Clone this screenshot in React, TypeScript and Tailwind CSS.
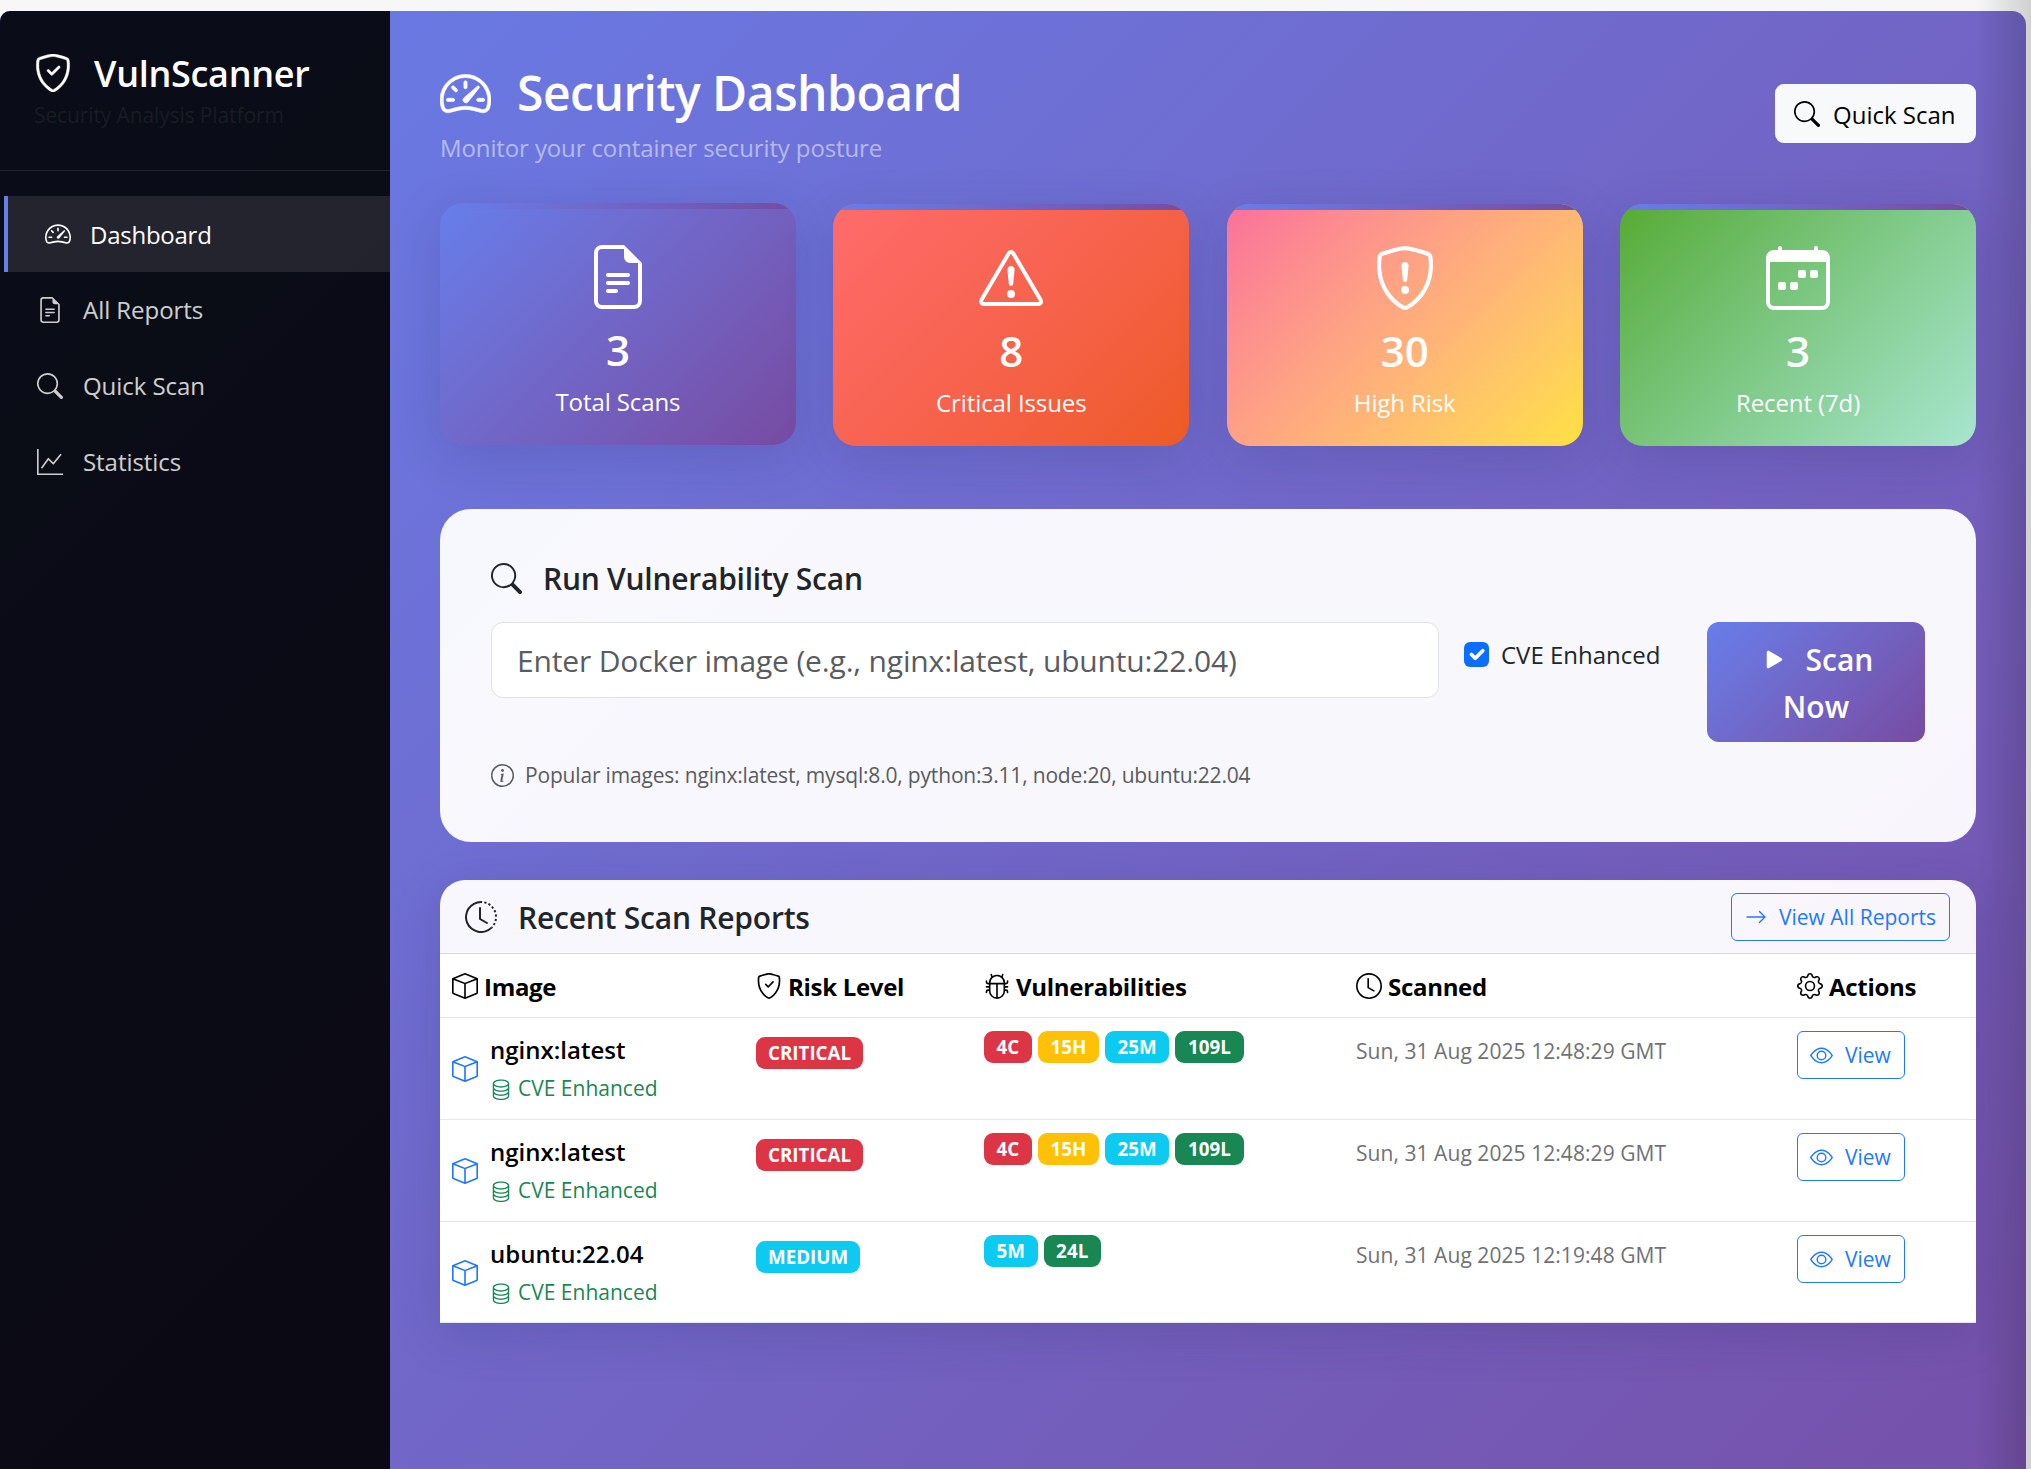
import React from "react";
import {
  BsArrowRight, BsBox, BsBug, BsCalendarWeek, BsClock, BsClockHistory, BsDatabase,
  BsExclamationTriangle, BsEye, BsFileEarmarkText, BsGear, BsGraphUp, BsInfoCircle,
  BsPlayFill, BsSearch, BsShieldCheck, BsShieldExclamation, BsSpeedometer2,
} from "react-icons/bs";

const navItems = [
  { label: "All Reports", icon: BsFileEarmarkText },
  { label: "Quick Scan", icon: BsSearch },
  { label: "Statistics", icon: BsGraphUp },
];

const stats = [
  { value: "3", label: "Total Scans", icon: BsFileEarmarkText, card: "-mt-px mb-px from-[#667eea] to-[#764ba2]" },
  { value: "8", label: "Critical Issues", icon: BsExclamationTriangle, card: "from-[#ff6b6b] to-[#ee5a24]" },
  { value: "30", label: "High Risk", icon: BsShieldExclamation, card: "from-[#fa709a] to-[#fee140]" },
  { value: "3", label: "Recent (7d)", icon: BsCalendarWeek, card: "from-[#56ab2f] to-[#a8e6cf]" },
];

const RED = "bg-[#dc3545]";
const YELLOW = "bg-[#ffc107]";
const CYAN = "bg-[#0dcaf0]";
const GREEN = "bg-[#198754]";

const rows = [
  { image: "nginx:latest", risk: "CRITICAL", riskColor: RED, height: "h-[102px]", time: "Sun, 31 Aug 2025 12:48:29 GMT", vulns: [["4C", RED], ["15H", YELLOW], ["25M", CYAN], ["109L", GREEN]] },
  { image: "nginx:latest", risk: "CRITICAL", riskColor: RED, height: "h-[102px]", time: "Sun, 31 Aug 2025 12:48:29 GMT", vulns: [["4C", RED], ["15H", YELLOW], ["25M", CYAN], ["109L", GREEN]] },
  { image: "ubuntu:22.04", risk: "MEDIUM", riskColor: CYAN, height: "h-[101px]", time: "Sun, 31 Aug 2025 12:19:48 GMT", vulns: [["5M", CYAN], ["24L", GREEN]] },
];

const columns = [
  { label: "Image", icon: BsBox },
  { label: "Risk Level", icon: BsShieldCheck },
  { label: "Vulnerabilities", icon: BsBug },
  { label: "Scanned", icon: BsClock },
  { label: "Actions", icon: BsGear },
];

const GRID = "grid grid-cols-[304px_228px_372px_441px_191px]";

function Sidebar() {
  return (
    <aside className="w-[390px] shrink-0 bg-black/90 text-white">
      <div className="h-[160px] border-b border-white/10 pt-[37px] pl-[34px]">
        <div className="flex h-[50px] items-center">
          <BsShieldCheck className="size-[38px]" strokeWidth={0.2} />
          <span className="ml-[22px] pt-[2px] text-[36px] font-semibold leading-[50px] tracking-[-0.3px]">VulnScanner</span>
        </div>
        <div className="text-[21px] leading-[34px] tracking-[-0.12px] text-[#191c23]">Security Analysis Platform</div>
      </div>
      <nav className="pt-[25px]">
        <div className="ml-1 flex h-[76px] items-center border-l-4 border-[#667eea] bg-white/10 pl-[37px]">
          <BsSpeedometer2 className="size-[26px]" />
          <span className="ml-[19px] pt-px text-[24px] tracking-[-0.25px]">Dashboard</span>
        </div>
        {navItems.map(({ label, icon: Icon }) => (
          <div key={label} className="flex h-[76px] items-center pl-[37px] text-white/80">
            <Icon className="size-[26px]" />
            <span className="ml-[20px] text-[24px] tracking-[-0.05px]">{label}</span>
          </div>
        ))}
      </nav>
    </aside>
  );
}

function Header() {
  return (
    <header className="flex h-[193px] justify-between pt-[47px]">
      <div>
        <h1 className="flex h-[70px] items-center text-[48px] font-semibold tracking-[-0.5px] text-white">
          <BsSpeedometer2 className="size-[51px]" strokeWidth={0.2} />
          <span className="ml-[26px]">Security Dashboard</span>
        </h1>
        <p className="pt-px text-[24px] leading-[38px] tracking-[-0.12px] text-white/50">Monitor your container security posture</p>
      </div>
      <button className="mt-[26px] flex h-[59px] w-[201px] items-center rounded-[9px] bg-[#f8f9fa] pl-[19px] text-[24px] text-black">
        <BsSearch className="size-[26px]" />
        <span className="ml-[13px] pt-[2px]">Quick Scan</span>
      </button>
    </header>
  );
}

function StatCards() {
  return (
    <section className="grid h-[242px] grid-cols-4 gap-[37.5px]">
      {stats.map(({ value, label, icon: Icon, card }, i) => (
        <div key={i} className={`flex flex-col items-center overflow-hidden rounded-[23px] bg-linear-135 text-white shadow-[0_12px_50px_rgba(31,38,90,0.16)] ${card}`}>
          <div className="h-[6px] w-full shrink-0 bg-linear-to-r from-[#667eea] to-[#764ba2]" />
          <Icon className="mt-[36px] size-[64px] shrink-0" />
          <div className="mt-[15px] text-[42px] font-semibold leading-[52px]">{value}</div>
          <div className="mt-[7px] text-[24px] leading-[38px] tracking-[-0.1px]">{label}</div>
        </div>
      ))}
    </section>
  );
}

function ScanPanel() {
  return (
    <section className="mt-[63px] h-[333px] rounded-[31px] bg-white/95 px-[51px] pt-[49px] text-[#212529]">
      <h2 className="flex h-[40px] items-center text-[30px] font-semibold tracking-[-0.25px]">
        <BsSearch className="size-[31px]" />
        <span className="ml-[21px]">Run Vulnerability Scan</span>
      </h2>
      <div className="mt-[24px] flex h-[120px] items-start">
        <div className="flex h-[76px] w-[948px] items-center rounded-[12px] border border-[#dee2e6] bg-white pl-[25px] text-[30px] tracking-[-0.16px] text-[#595c5f]">
          <span>Enter Docker image (e.g., nginx:latest, ubuntu:22.04)</span>
        </div>
        <div className="ml-[25px] mt-[15px] flex h-[34px] w-[243px] items-center">
          <span className="flex size-[25px] items-center justify-center rounded-[6px] bg-[#0d6efd]">
            <svg viewBox="0 0 20 20" className="size-[25px]" fill="none" stroke="#fff" strokeWidth="3" strokeLinecap="round" strokeLinejoin="round">
              <path d="m6 10 3 3 6-6" />
            </svg>
          </span>
          <span className="ml-[12px] pt-px text-[24px]">CVE Enhanced</span>
        </div>
        <button className="h-[120px] w-[218px] rounded-[12px] bg-linear-135 from-[#667eea] to-[#764ba2] pt-px text-center text-[30px] font-semibold leading-[47px] text-white">
          <span className="flex items-center justify-center">
            <BsPlayFill className="size-[31px]" />
            <span className="ml-[16px]">Scan</span>
          </span>
          <span className="block">Now</span>
        </button>
      </div>
      <p className="mt-[16px] flex h-[34px] items-center text-[21px] tracking-[-0.18px] text-[#595c5f]">
        <BsInfoCircle className="size-[23px]" />
        <span className="ml-[11px] pt-[2px]">Popular images: nginx:latest, mysql:8.0, python:3.11, node:20, ubuntu:22.04</span>
      </p>
    </section>
  );
}

function Badge({ color, children }: { color: string; children: React.ReactNode }) {
  return (
    <span className={`inline-flex h-[32px] items-center rounded-[9px] text-[18.75px] font-bold text-white ${color}`}>
      {children}
    </span>
  );
}

function Reports() {
  return (
    <section className="mt-[38px] rounded-t-[25px] bg-white/95 text-black shadow-[0_12px_50px_rgba(31,38,90,0.16)]">
      <div className="flex h-[74px] items-center justify-between border-b border-[#d9dadf] pl-[25px] pr-[26px]">
        <h2 className="flex items-center text-[30px] font-semibold tracking-[-0.22px] text-[#212529]">
          <BsClockHistory className="size-[32px]" />
          <span className="ml-[21px] pt-px">Recent Scan Reports</span>
        </h2>
        <button className="flex h-[48px] w-[219px] items-center rounded-[6px] border-[1.5px] border-[#1f78ff] pl-[13px] text-[21px] text-[#1f78ff]">
          <BsArrowRight className="size-[22px]" />
          <span className="ml-[12px] pt-[2px]">View All Reports</span>
        </button>
      </div>
      <div className="bg-white">
        <div className={`${GRID} h-[64px] border-b border-[#e3e5e8] pl-[12px] text-[24px] font-bold tracking-[-0.3px]`}>
          {columns.map(({ label, icon: Icon }) => (
            <div key={label} className="flex items-center">
              <Icon className="size-[26px]" />
              <span className="ml-[6px] pt-[2px]">{label}</span>
            </div>
          ))}
        </div>
        {rows.map((row, i) => (
          <div key={i} className={`${GRID} ${row.height} border-b border-[#e3e5e8] pl-[12px] pt-[13px]`}>
            <div className="flex">
              <BsBox className="mt-[25px] size-[26px] text-[#1f78ff]" />
              <div className="ml-[12px]">
                <div className="text-[24px] font-[550] leading-[38px]">{row.image}</div>
                <div className="mt-px flex h-[37px] items-center text-[21px] text-[#198754]">
                  <BsDatabase className="size-[22px]" />
                  <span className="ml-[6px] pt-px">CVE Enhanced</span>
                </div>
              </div>
            </div>
            <div className="pt-[6px] *:px-[12px]">
              <Badge color={row.riskColor}>{row.risk}</Badge>
            </div>
            <div className="flex gap-[6px] tracking-[0.1px] *:px-[12.5px]">
              {row.vulns.map(([text, color]) => (
                <Badge key={text} color={color}>{text}</Badge>
              ))}
            </div>
            <div className="text-[21px] leading-[40px] tracking-[0.06px] text-[#6f7275]">{row.time}</div>
            <div>
              <button className="flex h-[48px] w-[108px] items-center rounded-[6px] border-[1.5px] border-[#1f78ff] pl-[12px] text-[21px] text-[#1f78ff]">
                <BsEye className="size-[23px]" />
                <span className="ml-[12px] pt-px">View</span>
              </button>
            </div>
          </div>
        ))}
      </div>
    </section>
  );
}

export default function App() {
  return (
    <div className="relative h-[1469px] w-[2031px] overflow-hidden bg-[#f7f7f7] pt-[11px] font-['Open_Sans',sans-serif]">
      <div className="flex h-[1458px] w-[2026px] overflow-hidden rounded-tl-[10px] rounded-tr-[14px] bg-linear-135 from-[#667eea] to-[#764ba2] bg-[length:2026px_1900px] bg-no-repeat">
        <Sidebar />
        <main className="w-[1636px] pl-[50px] pr-[50px]">
          <Header />
          <StatCards />
          <ScanPanel />
          <Reports />
        </main>
      </div>
      <div className="absolute inset-y-0 right-0 w-[55px] bg-linear-to-r from-transparent to-black/16" />
    </div>
  );
}
